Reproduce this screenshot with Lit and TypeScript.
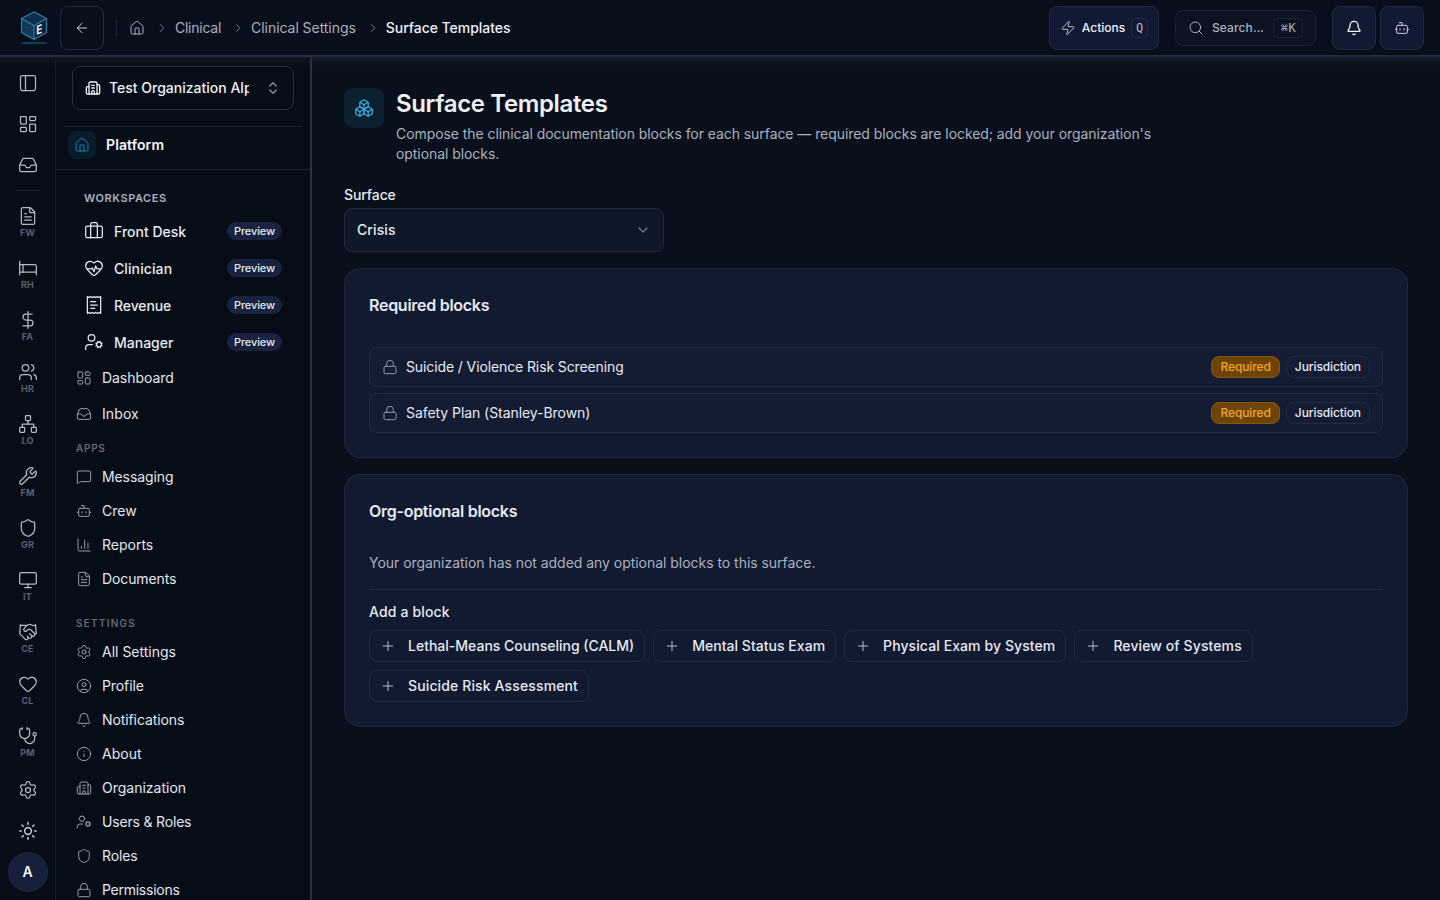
import { LitElement, html, css, svg } from "lit";
import { customElement, property } from "lit/decorators.js";
import { styleMap } from "lit/directives/style-map.js";

const p = (...ds: string[]) => ds.map((d) => svg`<path d=${d}></path>`);
const r = (x: number, y: number, w: number, h: number, rx: number) =>
  svg`<rect x=${x} y=${y} width=${w} height=${h} rx=${rx}></rect>`;
const c = (x: number, y: number, rad: number) => svg`<circle cx=${x} cy=${y} r=${rad}></circle>`;

const HEART =
  "M2 9.5a5.5 5.5 0 0 1 9.591-3.676.56.56 0 0 0 .818 0A5.49 5.49 0 0 1 22 9.5c0 2.29-1.5 4-3 5.5l-5.492 5.313a2 2 0 0 1-3 .019L5 15c-1.5-1.5-3-3.2-3-5.5";

const ICONS: Record<string, unknown> = {
  panel: [r(3, 3, 18, 18, 2), p("M9 3v18")],
  dashboard: [r(3, 3, 7, 9, 1), r(14, 3, 7, 5, 1), r(14, 12, 7, 9, 1), r(3, 16, 7, 5, 1)],
  inbox: p(
    "M22 12h-6l-2 3h-4l-2-3H2",
    "M5.45 5.11 2 12v6a2 2 0 0 0 2 2h16a2 2 0 0 0 2-2v-6l-3.45-6.89A2 2 0 0 0 16.76 4H7.24a2 2 0 0 0-1.79 1.11z"
  ),
  file: p(
    "M6 22a2 2 0 0 1-2-2V4a2 2 0 0 1 2-2h8a2.4 2.4 0 0 1 1.704.706l3.588 3.588A2.4 2.4 0 0 1 20 8v12a2 2 0 0 1-2 2z",
    "M14 2v5a1 1 0 0 0 1 1h5",
    "M10 9H8",
    "M16 13H8",
    "M16 17H8"
  ),
  bed: p("M2 4v16", "M2 8h18a2 2 0 0 1 2 2v10", "M2 17h20", "M6 8v9"),
  dollar: p("M12 2v20", "M17 5H9.5a3.5 3.5 0 0 0 0 7h5a3.5 3.5 0 0 1 0 7H6"),
  users: [
    p(
      "M16 21v-2a4 4 0 0 0-4-4H6a4 4 0 0 0-4 4v2",
      "M16 3.128a4 4 0 0 1 0 7.744",
      "M22 21v-2a4 4 0 0 0-3-3.87"
    ),
    c(9, 7, 4),
  ],
  network: [
    r(16, 16, 6, 6, 1),
    r(2, 16, 6, 6, 1),
    r(9, 2, 6, 6, 1),
    p("M5 16v-3a1 1 0 0 1 1-1h12a1 1 0 0 1 1 1v3", "M12 12V8"),
  ],
  wrench: p(
    "M14.7 6.3a1 1 0 0 0 0 1.4l1.6 1.6a1 1 0 0 0 1.4 0l3.106-3.105c.32-.322.863-.22.983.218a6 6 0 0 1-8.259 7.057l-7.91 7.91a1 1 0 0 1-2.999-3l7.91-7.91a6 6 0 0 1 7.057-8.259c.438.12.54.662.219.984z"
  ),
  shield: p(
    "M20 13c0 5-3.5 7.5-7.66 8.95a1 1 0 0 1-.67-.01C7.5 20.5 4 18 4 13V6a1 1 0 0 1 1-1c2 0 4.5-1.2 6.24-2.72a1.17 1.17 0 0 1 1.52 0C14.51 3.81 17 5 19 5a1 1 0 0 1 1 1z"
  ),
  monitor: [r(2, 3, 20, 14, 2), p("M8 21h8", "M12 17v4")],
  handshake: p(
    "m11 17 2 2a1 1 0 1 0 3-3",
    "m14 14 2.5 2.5a1 1 0 1 0 3-3l-3.88-3.88a3 3 0 0 0-4.24 0l-.88.88a1 1 0 1 1-3-3l2.81-2.81a5.79 5.79 0 0 1 7.06-.87l.47.28a2 2 0 0 0 1.42.25L21 4",
    "m21 3 1 11h-2",
    "M3 3 2 14l6.5 6.5a1 1 0 1 0 3-3",
    "M3 4h8"
  ),
  heart: p(HEART),
  pulse: p(HEART, "M3.22 13H9.5l.5-1 2 4.5 2-7 1.5 3.5h5.27"),
  stethoscope: [
    p(
      "M11 2v2",
      "M5 2v2",
      "M5 3H4a2 2 0 0 0-2 2v4a6 6 0 0 0 12 0V5a2 2 0 0 0-2-2h-1",
      "M8 15a6 6 0 0 0 12 0v-3"
    ),
    c(20, 10, 2),
  ],
  settings: [
    p(
      "M9.671 4.136a2.34 2.34 0 0 1 4.659 0 2.34 2.34 0 0 0 3.319 1.915 2.34 2.34 0 0 1 2.33 4.033 2.34 2.34 0 0 0 0 3.831 2.34 2.34 0 0 1-2.33 4.033 2.34 2.34 0 0 0-3.319 1.915 2.34 2.34 0 0 1-4.659 0 2.34 2.34 0 0 0-3.32-1.915 2.34 2.34 0 0 1-2.33-4.033 2.34 2.34 0 0 0 0-3.831A2.34 2.34 0 0 1 6.35 6.051a2.34 2.34 0 0 0 3.319-1.915"
    ),
    c(12, 12, 3),
  ],
  sun: [
    c(12, 12, 4),
    p(
      "M12 2v2",
      "M12 20v2",
      "m4.93 4.93 1.41 1.41",
      "m17.66 17.66 1.41 1.41",
      "M2 12h2",
      "M20 12h2",
      "m6.34 17.66-1.41 1.41",
      "m19.07 4.93-1.41 1.41"
    ),
  ],
  building: p(
    "M10 12h4",
    "M10 8h4",
    "M14 21v-3a2 2 0 0 0-4 0v3",
    "M6 10H4a2 2 0 0 0-2 2v7a2 2 0 0 0 2 2h16a2 2 0 0 0 2-2V9a2 2 0 0 0-2-2h-2",
    "M6 21V5a2 2 0 0 1 2-2h8a2 2 0 0 1 2 2v16"
  ),
  briefcase: [p("M16 20V4a2 2 0 0 0-2-2h-4a2 2 0 0 0-2 2v16"), r(2, 6, 20, 14, 2)],
  receipt: p(
    "M4 2v20l2-1 2 1 2-1 2 1 2-1 2 1 2-1 2 1V2l-2 1-2-1-2 1-2-1-2 1-2-1-2 1Z",
    "M14 8H8",
    "M16 12H8",
    "M13 16H8"
  ),
  usercog: [
    p(
      "M10 15H6a4 4 0 0 0-4 4v2",
      "m14.305 16.53.923-.382",
      "m15.228 13.852-.923-.383",
      "m16.852 12.228-.383-.923",
      "m16.852 17.772-.383.924",
      "m19.148 12.228.383-.923",
      "m19.53 18.696-.382-.924",
      "m20.772 13.852.924-.383",
      "m20.772 16.148.924.383"
    ),
    c(18, 15, 3),
    c(9, 7, 4),
  ],
  message: p(
    "M22 17a2 2 0 0 1-2 2H6.828a2 2 0 0 0-1.414.586l-2.202 2.202A.71.71 0 0 1 2 21.286V5a2 2 0 0 1 2-2h16a2 2 0 0 1 2 2z"
  ),
  bot: [p("M12 8V4H8", "M2 14h2", "M20 14h2", "M15 13v2", "M9 13v2"), r(4, 8, 16, 12, 2)],
  chart: p("M3 3v16a2 2 0 0 0 2 2h16", "M18 17V9", "M13 17V5", "M8 17v-3"),
  user: [
    c(12, 12, 10),
    c(12, 10, 3),
    p("M7 20.662V19a2 2 0 0 1 2-2h6a2 2 0 0 1 2 2v1.662"),
  ],
  bell: p(
    "M10.268 21a2 2 0 0 0 3.464 0",
    "M3.262 15.326A1 1 0 0 0 4 17h16a1 1 0 0 0 .74-1.673C19.41 13.956 18 12.499 18 8A6 6 0 0 0 6 8c0 4.499-1.411 5.956-2.738 7.326"
  ),
  info: [c(12, 12, 10), p("M12 16v-4", "M12 8h.01")],
  lock: [r(3, 11, 18, 11, 2), p("M7 11V7a5 5 0 0 1 10 0v4")],
  house: p(
    "M15 21v-8a1 1 0 0 0-1-1h-4a1 1 0 0 0-1 1v8",
    "M3 10a2 2 0 0 1 .709-1.528l7-6a2 2 0 0 1 2.582 0l7 6A2 2 0 0 1 21 10v9a2 2 0 0 1-2 2H5a2 2 0 0 1-2-2z"
  ),
  zap: p(
    "M4 14a1 1 0 0 1-.78-1.63l9.9-10.2a.5.5 0 0 1 .86.46l-1.92 6.02A1 1 0 0 0 13 10h7a1 1 0 0 1 .78 1.63l-9.9 10.2a.5.5 0 0 1-.86-.46l1.92-6.02A1 1 0 0 0 11 14z"
  ),
  search: [p("m21 21-4.34-4.34"), c(11, 11, 8)],
  boxes: p(
    "M2.97 12.92A2 2 0 0 0 2 14.63v3.24a2 2 0 0 0 .97 1.71l3 1.8a2 2 0 0 0 2.06 0L12 19v-5.5l-5-3-4.03 2.42Z",
    "m7 16.5-4.74-2.85",
    "m7 16.5 5-3",
    "M7 16.5v5.17",
    "M12 13.5V19l3.97 2.38a2 2 0 0 0 2.06 0l3-1.8a2 2 0 0 0 .97-1.71v-3.24a2 2 0 0 0-.97-1.71L17 10.5l-5 3Z",
    "m17 16.5-5-3",
    "m17 16.5 4.74-2.85",
    "M17 16.5v5.17",
    "M7.97 4.42A2 2 0 0 0 7 6.13v4.37l5 3 5-3V6.13a2 2 0 0 0-.97-1.71l-3-1.8a2 2 0 0 0-2.06 0l-3 1.8Z",
    "M12 8 7.26 5.15",
    "m12 8 4.74-2.85",
    "M12 13.5V8"
  ),
  updown: p("m7 15 5 5 5-5", "m7 9 5-5 5 5"),
  right: p("m9 18 6-6-6-6"),
  down: p("m6 9 6 6 6-6"),
  left: p("m12 19-7-7 7-7", "M19 12H5"),
  plus: p("M5 12h14", "M12 5v14"),
};

// A label with its own tracking, in px.
type Label = { text: string; icon?: string; track?: number };
const tracked = (l: Label) =>
  html`<span style=${styleMap(l.track ? { letterSpacing: `${l.track}px` } : {})}>${l.text}</span>`;

@customElement("ui-icon")
class UiIcon extends LitElement {
  @property() name = "";
  @property({ type: Number }) size = 16;
  @property({ type: Number }) stroke = 1.5;
  static styles = css`
    :host {
      display: inline-flex;
      flex: none;
    }
    svg {
      display: block;
      fill: none;
      stroke: currentColor;
      stroke-linecap: round;
      stroke-linejoin: round;
    }
  `;
  render() {
    return html`<svg width=${this.size} height=${this.size} viewBox="0 0 24 24" stroke-width=${this.stroke}>
      ${ICONS[this.name]}
    </svg>`;
  }
}

const base = css`
  * {
    box-sizing: border-box;
  }
  :host {
    font-family: Inter, "Liberation Sans", sans-serif;
    font-size: 14px;
    line-height: 20px;
    color: #e6eaf2;
  }
`;

const CRUMBS: Label[] = [
  { text: "Clinical", track: -0.25 },
  { text: "Clinical Settings", track: -0.05 },
];

@customElement("top-bar")
class TopBar extends LitElement {
  static styles = [
    base,
    css`
      :host {
        display: block;
        flex: none;
      }
      .bar {
        display: flex;
        align-items: center;
        height: 57px;
        padding: 1px 16px 0 20px;
        border-bottom: 2px solid #232d3e;
        background: #090e1b;
      }
      .logo {
        width: 28px;
        height: 36px;
        margin-right: 12px;
      }
      .btn {
        display: flex;
        align-items: center;
        justify-content: center;
        width: 44px;
        height: 44px;
        border: 1px solid #232b3c;
        border-radius: 8px;
        color: #c9cfda;
      }
      .fill {
        background: #121a33;
      }
      .sep {
        width: 1px;
        height: 16px;
        margin: 0 12px;
        background: #232b3a;
      }
      .crumbs {
        display: flex;
        align-items: center;
        color: #a9b1bf;
      }
      .crumbs ui-icon.chev {
        margin: 0 6px 0 10px;
        color: #7f8796;
      }
      .crumbs .now {
        color: #eef1f7;
        font-weight: 500;
        letter-spacing: -0.05px;
      }
      .grow {
        flex: 1;
      }
      .actions {
        width: 110px;
        gap: 6px;
        margin-right: 16px;
        font-size: 12px;
        font-weight: 500;
        color: #eef1f7;
      }
      .actions ui-icon {
        color: #b4bbc8;
      }
      kbd {
        display: flex;
        align-items: center;
        justify-content: center;
        height: 20px;
        border: 1px solid #232b3c;
        border-radius: 4px;
        font: 500 12px/16px "DejaVu Sans Mono", monospace;
        color: #b0b7c4;
      }
      .q {
        width: 17px;
      }
      .search {
        display: flex;
        align-items: center;
        width: 141px;
        height: 36px;
        padding: 0 12px;
        margin-right: 16px;
        border: 1px solid #1a2233;
        border-radius: 8px;
        background: #0c1222;
        font-size: 12px;
        font-weight: 500;
        letter-spacing: 0.1px;
        color: #a9b1bf;
      }
      .search span {
        flex: 1;
        margin-left: 8px;
      }
      .k {
        width: 30px;
        padding-left: 1px;
        border-color: #1b2434;
        letter-spacing: 0.6px;
      }
      .bell {
        margin-right: 4px;
        color: #f3f5f9;
      }
    `,
  ];
  render() {
    return html`<header class="bar">
      <svg class="logo" viewBox="0 0 28 36">
        <path d="M14 2 26.500 8.500 14 15.500 1.500 8.500Z" fill="#0e2f4a"></path>
        <path d="M1.500 8.500 14 15.500V29.500L1.500 22.500Z" fill="#103a58"></path>
        <path d="M26.500 8.500 14 15.500V29.500L26.500 22.500Z" fill="#0c2238"></path>
        <path
          d="M14 2 26.500 8.500V22.500L14 29.500 1.500 22.500V8.500ZM1.500 8.500 14 15.500 26.500 8.500M14 15.500V29.500"
          fill="none"
          stroke="#3181ab"
          stroke-width="1.100"
          stroke-linejoin="round"
        ></path>
        <text
          transform="translate(16.200 25) skewY(-20) scale(0.780 1)"
          font-family="Inter, sans-serif"
          font-size="12.500"
          font-weight="700"
          fill="#e2edf8"
        >E</text>
        <ellipse cx="14" cy="33" rx="13.500" ry="1.300" fill="#0c405f"></ellipse>
      </svg>
      <div class="btn"><ui-icon name="left" size="16"></ui-icon></div>
      <div class="sep"></div>
      <nav class="crumbs">
        <ui-icon name="house" size="16"></ui-icon>
        ${CRUMBS.map((l) => html`<ui-icon class="chev" name="right" size="14"></ui-icon>${tracked(l)}`)}
        <ui-icon class="chev" name="right" size="14"></ui-icon><span class="now">Surface Templates</span>
      </nav>
      <div class="grow"></div>
      <div class="btn fill actions">
        <ui-icon name="zap" size="16"></ui-icon>Actions<kbd class="q">Q</kbd>
      </div>
      <div class="search">
        <ui-icon name="search" size="16"></ui-icon><span>Search...</span><kbd class="k">⌘K</kbd>
      </div>
      <div class="btn fill bell"><ui-icon name="bell" size="16" stroke="2"></ui-icon></div>
      <div class="btn fill"><ui-icon name="bot" size="16"></ui-icon></div>
    </header>`;
  }
}

const RAIL = [
  ["file", "FW"],
  ["bed", "RH"],
  ["dollar", "FA"],
  ["users", "HR"],
  ["network", "LO"],
  ["wrench", "FM"],
  ["shield", "GR"],
  ["monitor", "IT"],
  ["handshake", "CE"],
  ["heart", "CL"],
  ["stethoscope", "PM"],
];

@customElement("icon-rail")
class IconRail extends LitElement {
  static styles = [
    base,
    css`
      :host {
        display: flex;
        flex-direction: column;
        align-items: center;
        flex: none;
        width: 56px;
        padding: 6px 0 8px;
        border-right: 1px solid #161e2b;
        color: #b3bac6;
      }
      .item {
        display: flex;
        flex: none;
        height: 41px;
        padding-top: 10px;
      }
      .sep {
        flex: none;
        width: 24px;
        height: 1px;
        margin: 4px 0 15px;
        background: #1a2230;
      }
      .mod {
        display: flex;
        flex: none;
        flex-direction: column;
        align-items: center;
        height: 52px;
      }
      .mod:nth-last-child(4) {
        height: 44px;
      }
      .mod span {
        margin-top: 1px;
        font-size: 9px;
        line-height: 12px;
        font-weight: 700;
        letter-spacing: 0.2px;
        color: #59616f;
      }
      .avatar {
        display: flex;
        flex: none;
        align-items: center;
        justify-content: center;
        width: 40px;
        height: 40px;
        border: 1px solid #1d2840;
        border-radius: 50%;
        background: #17203a;
        font-weight: 600;
        color: #f3f5f9;
      }
    `,
  ];
  render() {
    return html`
      ${["panel", "dashboard", "inbox"].map(
        (n) => html`<div class="item"><ui-icon name=${n} size="20"></ui-icon></div>`
      )}
      <div class="sep"></div>
      ${RAIL.map(
        ([n, t]) => html`<div class="mod"><ui-icon name=${n} size="20"></ui-icon><span>${t}</span></div>`
      )}
      <div class="item"><ui-icon name="settings" size="20"></ui-icon></div>
      <div class="item"><ui-icon name="sun" size="20" stroke="2"></ui-icon></div>
      <div class="avatar">A</div>
    `;
  }
}

const WORKSPACES: Label[] = [
  { icon: "briefcase", text: "Front Desk" },
  { icon: "pulse", text: "Clinician", track: 0.1 },
  { icon: "receipt", text: "Revenue", track: -0.1 },
  { icon: "usercog", text: "Manager" },
];
const MAIN: Label[] = [
  { icon: "dashboard", text: "Dashboard", track: -0.06 },
  { icon: "inbox", text: "Inbox", track: 0.1 },
];
const APPS: Label[] = [
  { icon: "message", text: "Messaging", track: -0.1 },
  { icon: "bot", text: "Crew" },
  { icon: "chart", text: "Reports" },
  { icon: "file", text: "Documents", track: -0.1 },
];
const SETTINGS: Label[] = [
  { icon: "settings", text: "All Settings" },
  { icon: "user", text: "Profile", track: -0.1 },
  { icon: "bell", text: "Notifications", track: -0.1 },
  { icon: "info", text: "About" },
  { icon: "building", text: "Organization" },
  { icon: "usercog", text: "Users & Roles", track: -0.18 },
  { icon: "shield", text: "Roles", track: -0.15 },
  { icon: "lock", text: "Permissions", track: -0.26 },
];

@customElement("side-nav")
class SideNav extends LitElement {
  static styles = [
    base,
    css`
      :host {
        display: flex;
        flex-direction: column;
        flex: none;
        width: 256px;
        overflow: hidden;
        border-right: 2px solid #283242;
      }
      .org {
        display: flex;
        align-items: center;
        flex: none;
        height: 44px;
        margin: 9px 16px 16px;
        padding: 0 12px;
        border: 1px solid #283040;
        border-radius: 8px;
        font-weight: 500;
        color: #eef1f7;
      }
      .org span {
        width: 140px;
        margin: 0 auto 0 8px;
        overflow: hidden;
        white-space: nowrap;
      }
      .org .ud {
        color: #8b93a1;
      }
      .platform {
        display: flex;
        align-items: center;
        flex: none;
        height: 43px;
        padding: 0 4px 6px;
        margin: 0 8px;
        border-top: 1px solid #1a2230;
        font-weight: 600;
        letter-spacing: 0.12px;
        color: #f3f5f9;
      }
      .tile {
        display: flex;
        align-items: center;
        justify-content: center;
        width: 28px;
        height: 28px;
        margin-right: 10px;
        border-radius: 8px;
        background: #071d2e;
        color: #1c7fae;
      }
      .rule {
        flex: none;
        height: 1px;
        margin-bottom: 18px;
        background: #1a2230;
      }
      .title {
        flex: none;
        padding-left: 28px;
        font-size: 11px;
        line-height: 20px;
        font-weight: 600;
        letter-spacing: 0.55px;
        color: #a9b1bf;
        margin-bottom: 5px;
      }
      .spaces {
        flex: none;
        height: 147px;
      }
      .ws {
        display: flex;
        align-items: center;
        height: 37px;
        padding: 0 28px;
        font-weight: 500;
        color: #e6eaf2;
      }
      .ws ui-icon {
        margin: -2px 10px 0 0;
      }
      .ws .tag {
        margin: -1px 0 0 auto;
        height: 18px;
        padding: 0 7px;
        border-radius: 9px;
        background: #19233f;
        font-size: 11px;
        line-height: 18px;
        letter-spacing: -0.12px;
      }
      .row {
        display: flex;
        align-items: center;
        flex: none;
        gap: 10px;
        height: 34px;
        padding-left: 20px;
        color: #e3e7ef;
      }
      .tall {
        height: 36px;
      }
      .row ui-icon {
        color: #959dab;
      }
      .sub {
        flex: none;
        height: 28px;
        padding: 6px 0 0 20px;
        font-size: 10px;
        font-weight: 600;
        letter-spacing: 0.7px;
        color: #626a78;
      }
      .sub.second {
        height: 39px;
        padding-top: 17px;
        letter-spacing: 1.25px;
      }
    `,
  ];
  rows(list: Label[], tall = false) {
    return list.map(
      (l) =>
        html`<div class=${tall ? "row tall" : "row"}><ui-icon name=${l.icon!} size="16"></ui-icon>${tracked(l)}</div>`
    );
  }
  render() {
    return html`
      <div class="org">
        <ui-icon name="building" size="16" stroke="2"></ui-icon><span>Test Organization Alpha</span>
        <ui-icon class="ud" name="updown" size="16" stroke="2"></ui-icon>
      </div>
      <div class="platform">
        <div class="tile"><ui-icon name="house" size="16"></ui-icon></div>
        Platform
      </div>
      <div class="rule"></div>
      <div class="title">WORKSPACES</div>
      <div class="spaces">
        ${WORKSPACES.map(
          (l) => html`<div class="ws">
            <ui-icon name=${l.icon!} size="20"></ui-icon>${tracked(l)}<span class="tag">Preview</span>
          </div>`
        )}
      </div>
      ${this.rows(MAIN, true)}
      <div class="sub">APPS</div>
      ${this.rows(APPS)}
      <div class="sub second">SETTINGS</div>
      ${this.rows(SETTINGS)}
    `;
  }
}

const REQUIRED: Label[] = [
  { text: "Suicide / Violence Risk Screening", track: -0.11 },
  { text: "Safety Plan (Stanley-Brown)", track: -0.06 },
];
const OPTIONAL: Label[] = [
  { text: "Lethal-Means Counseling (CALM)" },
  { text: "Mental Status Exam", track: 0.03 },
  { text: "Physical Exam by System", track: 0.09 },
  { text: "Review of Systems", track: 0.1 },
  { text: "Suicide Risk Assessment", track: 0.13 },
];

@customElement("surface-templates")
class SurfaceTemplates extends LitElement {
  static styles = [
    base,
    css`
      :host {
        display: block;
        flex: 1;
        min-width: 0;
        padding: 31px 32px 0;
      }
      .head {
        display: flex;
        gap: 12px;
      }
      .tile {
        display: flex;
        align-items: center;
        justify-content: center;
        flex: none;
        width: 40px;
        height: 40px;
        border-radius: 10px;
        background: #0c2030;
        color: #38aee2;
      }
      h1 {
        margin: 0;
        font-size: 24px;
        line-height: 32px;
        font-weight: 600;
        letter-spacing: -0.015em;
        color: #eef1f7;
      }
      .desc {
        max-width: 768px;
        margin: 4px 0 0;
        color: #a9b1bf;
        letter-spacing: -0.067px;
      }
      .label {
        margin: 21px 0 3px;
        font-weight: 500;
        letter-spacing: -0.1px;
      }
      .select {
        display: flex;
        align-items: center;
        justify-content: space-between;
        width: 320px;
        height: 44px;
        padding: 0 12px;
        border: 1px solid #1f2a3b;
        border-radius: 8px;
        background: #0f1828;
        font-weight: 500;
        letter-spacing: 0.1px;
      }
      .select ui-icon {
        color: #6e7685;
      }
      .card {
        margin-top: 16px;
        padding: 24px;
        border: 1px solid #1e283c;
        border-radius: 16px;
        background: #121a32;
      }
      h2 {
        margin: 0 0 30px;
        font-size: 16px;
        line-height: 24px;
        font-weight: 600;
        letter-spacing: -0.017em;
        color: #e6eaf2;
      }
      .req {
        display: flex;
        align-items: center;
        height: 40px;
        padding: 0 12px;
        border: 1px solid #212b40;
        border-radius: 8px;
        background: #141c33;
      }
      .req + .req {
        margin-top: 6px;
      }
      .req ui-icon {
        margin-right: 8px;
        color: #8f97a6;
      }
      .badge {
        height: 22px;
        padding: 0 8px;
        border: 1px solid #212b40;
        border-radius: 8px;
        font-size: 12px;
        line-height: 20px;
        font-weight: 500;
        letter-spacing: -0.1px;
      }
      .warn {
        margin: 0 6px 0 auto;
        border-color: #84590f;
        background: #6d4406;
        color: #f2a626;
      }
      .empty {
        padding-bottom: 16px;
        border-bottom: 1px solid #212b40;
        color: #a9b1bf;
        letter-spacing: -0.035px;
      }
      .add {
        margin: 12px 0 8px;
        font-weight: 500;
        letter-spacing: 0.15px;
      }
      .chips {
        display: flex;
        flex-wrap: wrap;
        gap: 8px;
      }
      .chip {
        display: flex;
        align-items: center;
        height: 32px;
        padding: 0 10px;
        border: 1px solid #212b40;
        border-radius: 8px;
        font-weight: 500;
      }
      .chip ui-icon {
        margin-right: 12px;
        color: #b4bbc8;
      }
    `,
  ];
  render() {
    return html`
      <div class="head">
        <div class="tile"><ui-icon name="boxes" size="20"></ui-icon></div>
        <div>
          <h1>Surface Templates</h1>
          <p class="desc">
            Compose the clinical documentation blocks for each surface — required blocks are locked; add your
            organization's optional blocks.
          </p>
        </div>
      </div>
      <div class="label">Surface</div>
      <div class="select">Crisis<ui-icon name="down" size="16" stroke="2"></ui-icon></div>
      <section class="card">
        <h2>Required blocks</h2>
        ${REQUIRED.map(
          (l) => html`<div class="req">
            <ui-icon name="lock" size="16"></ui-icon>${tracked(l)}
            <span class="badge warn">Required</span><span class="badge">Jurisdiction</span>
          </div>`
        )}
      </section>
      <section class="card">
        <h2>Org-optional blocks</h2>
        <div class="empty">Your organization has not added any optional blocks to this surface.</div>
        <div class="add">Add a block</div>
        <div class="chips">
          ${OPTIONAL.map((l) => html`<div class="chip"><ui-icon name="plus" size="16"></ui-icon>${tracked(l)}</div>`)}
        </div>
      </section>
    `;
  }
}

@customElement("app-root")
class AppRoot extends LitElement {
  static styles = [
    base,
    css`
      :host {
        display: flex;
        flex-direction: column;
        height: 100vh;
        overflow: hidden;
        background: #090f1b;
      }
      .body {
        display: flex;
        flex: 1;
        min-height: 0;
        background: linear-gradient(#131a27, rgba(9, 15, 27, 0) 10px);
      }
      .left {
        display: flex;
        background: linear-gradient(#111824, #070d17 10px);
      }
    `,
  ];
  render() {
    return html`
      <top-bar></top-bar>
      <div class="body">
        <div class="left"><icon-rail></icon-rail><side-nav></side-nav></div>
        <surface-templates></surface-templates>
      </div>
    `;
  }
}
